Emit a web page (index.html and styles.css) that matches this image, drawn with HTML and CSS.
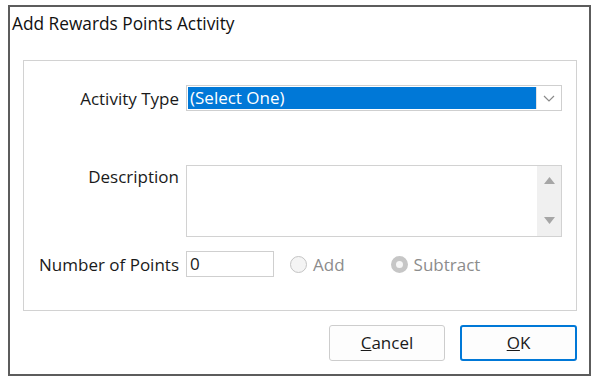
FILE: index.html
```html
<!DOCTYPE html>
<html lang="en">

<head>
    <meta charset="UTF-8">
    <title>Add Rewards Points Activity</title>
    <link rel="stylesheet" href="styles.css">
</head>

<body>
    <div class="dialog">
        <div class="title">Add Rewards Points Activity</div>
        <div class="group">
            <div class="form">
                <label class="lbl lbl-mid">Activity Type</label>
                <div class="select">
                    <div class="select-value">(Select One)</div>
                    <div class="select-btn">
                        <svg width="12" height="7" viewBox="0 0 12 7">
                            <path d="M1 1 L6 6 L11 1" fill="none" stroke="#8a8a8a" stroke-width="1.2"/>
                        </svg>
                    </div>
                </div>

                <label class="lbl lbl-top row2">Description</label>
                <div class="memo row2">
                    <div class="memo-text"></div>
                    <div class="scroll">
                        <svg width="11" height="7" viewBox="0 0 11 7"><path d="M0 7 L5.5 0 L11 7 Z" fill="#a6a6a6"/></svg>
                        <svg width="11" height="7" viewBox="0 0 11 7"><path d="M0 0 L5.5 7 L11 0 Z" fill="#a6a6a6"/></svg>
                    </div>
                </div>

                <label class="lbl lbl-mid row3">Number of Points</label>
                <div class="points-row row3">
                    <div class="num">0</div>
                    <div class="radio radio-add">
                        <span class="dot"></span>
                        <span>Add</span>
                    </div>
                    <div class="radio radio-sub">
                        <span class="dot checked"></span>
                        <span>Subtract</span>
                    </div>
                </div>
            </div>
        </div>
        <div class="buttons">
            <div class="btn"><u>C</u>ancel</div>
            <div class="btn btn-default"><u>O</u>K</div>
        </div>
    </div>
</body>

</html>
```

FILE: styles.css
```css
* {
    margin: 0;
    padding: 0;
    box-sizing: border-box;
}

body {
    background: #fff;
    font-family: "Open Sans", "Noto Sans", sans-serif;
    font-size: 17px;
    color: #1a1a1a;
}

.dialog {
    margin: 5px 0 0 8px;
    width: 583px;
    height: 371px;
    border: 2px solid #5c5c5c;
    padding: 0 12px 0 13px;
}

.title {
    height: 53px;
    padding: 5px 0 0 0;
    margin-left: -11px;
    font-size: 17.3px;
    color: #111;
}

.group {
    border: 1px solid #d2d2d2;
    height: 251px;
    padding: 24px 13px 0 0;
}

.form {
    display: grid;
    grid-template-columns: 155px 376px;
    column-gap: 7px;
}

.row2 {
    margin-top: 54px;
}

.row3 {
    margin-top: 14px;
}

.lbl {
    text-align: right;
}

.lbl-mid {
    align-self: center;
}

.lbl-top {
    padding-top: 0;
}

.select {
    display: flex;
    border: 1px solid #cfcfcf;
    padding: 1px;
    height: 26px;
}

.select-value {
    flex: 1;
    background: #0078d7;
    color: #fff;
    padding-left: 2px;
    line-height: 22px;
}

.select-btn {
    width: 24px;
    display: flex;
    align-items: center;
    justify-content: center;
    border-left: 1px solid #e3e3e3;
}

.memo {
    display: flex;
    border: 1px solid #d2d2d2;
    height: 72px;
}

.memo-text {
    flex: 1;
}

.scroll {
    width: 24px;
    background: #f0f0f0;
    display: flex;
    flex-direction: column;
    justify-content: space-between;
    align-items: center;
    padding: 11px 0 12px;
}

.points-row {
    display: flex;
    align-items: center;
    height: 26px;
}

.num {
    width: 88px;
    height: 26px;
    border: 1px solid #cfcfcf;
    padding-left: 3px;
    line-height: 24px;
}

.radio {
    display: flex;
    align-items: center;
    gap: 6px;
    color: #8c8c8c;
}

.radio-add {
    margin-left: 16px;
}

.radio-sub {
    margin-left: 46px;
}

.dot {
    width: 17px;
    height: 17px;
    border-radius: 50%;
    border: 1px solid #c4c4c4;
    background: #f4f4f4;
}

.dot.checked {
    border: 5px solid #c6c6c6;
    background: #f6f6f6;
}

.buttons {
    display: flex;
    justify-content: flex-end;
    gap: 15px;
    margin-top: 14px;
}

.btn {
    width: 116px;
    height: 36px;
    border: 1px solid #cdcdcd;
    border-radius: 3px;
    background: #fdfdfd;
    text-align: center;
    line-height: 33px;
}

.btn-default {
    width: 117px;
    border: 2px solid #0078d7;
    line-height: 31px;
}
```
